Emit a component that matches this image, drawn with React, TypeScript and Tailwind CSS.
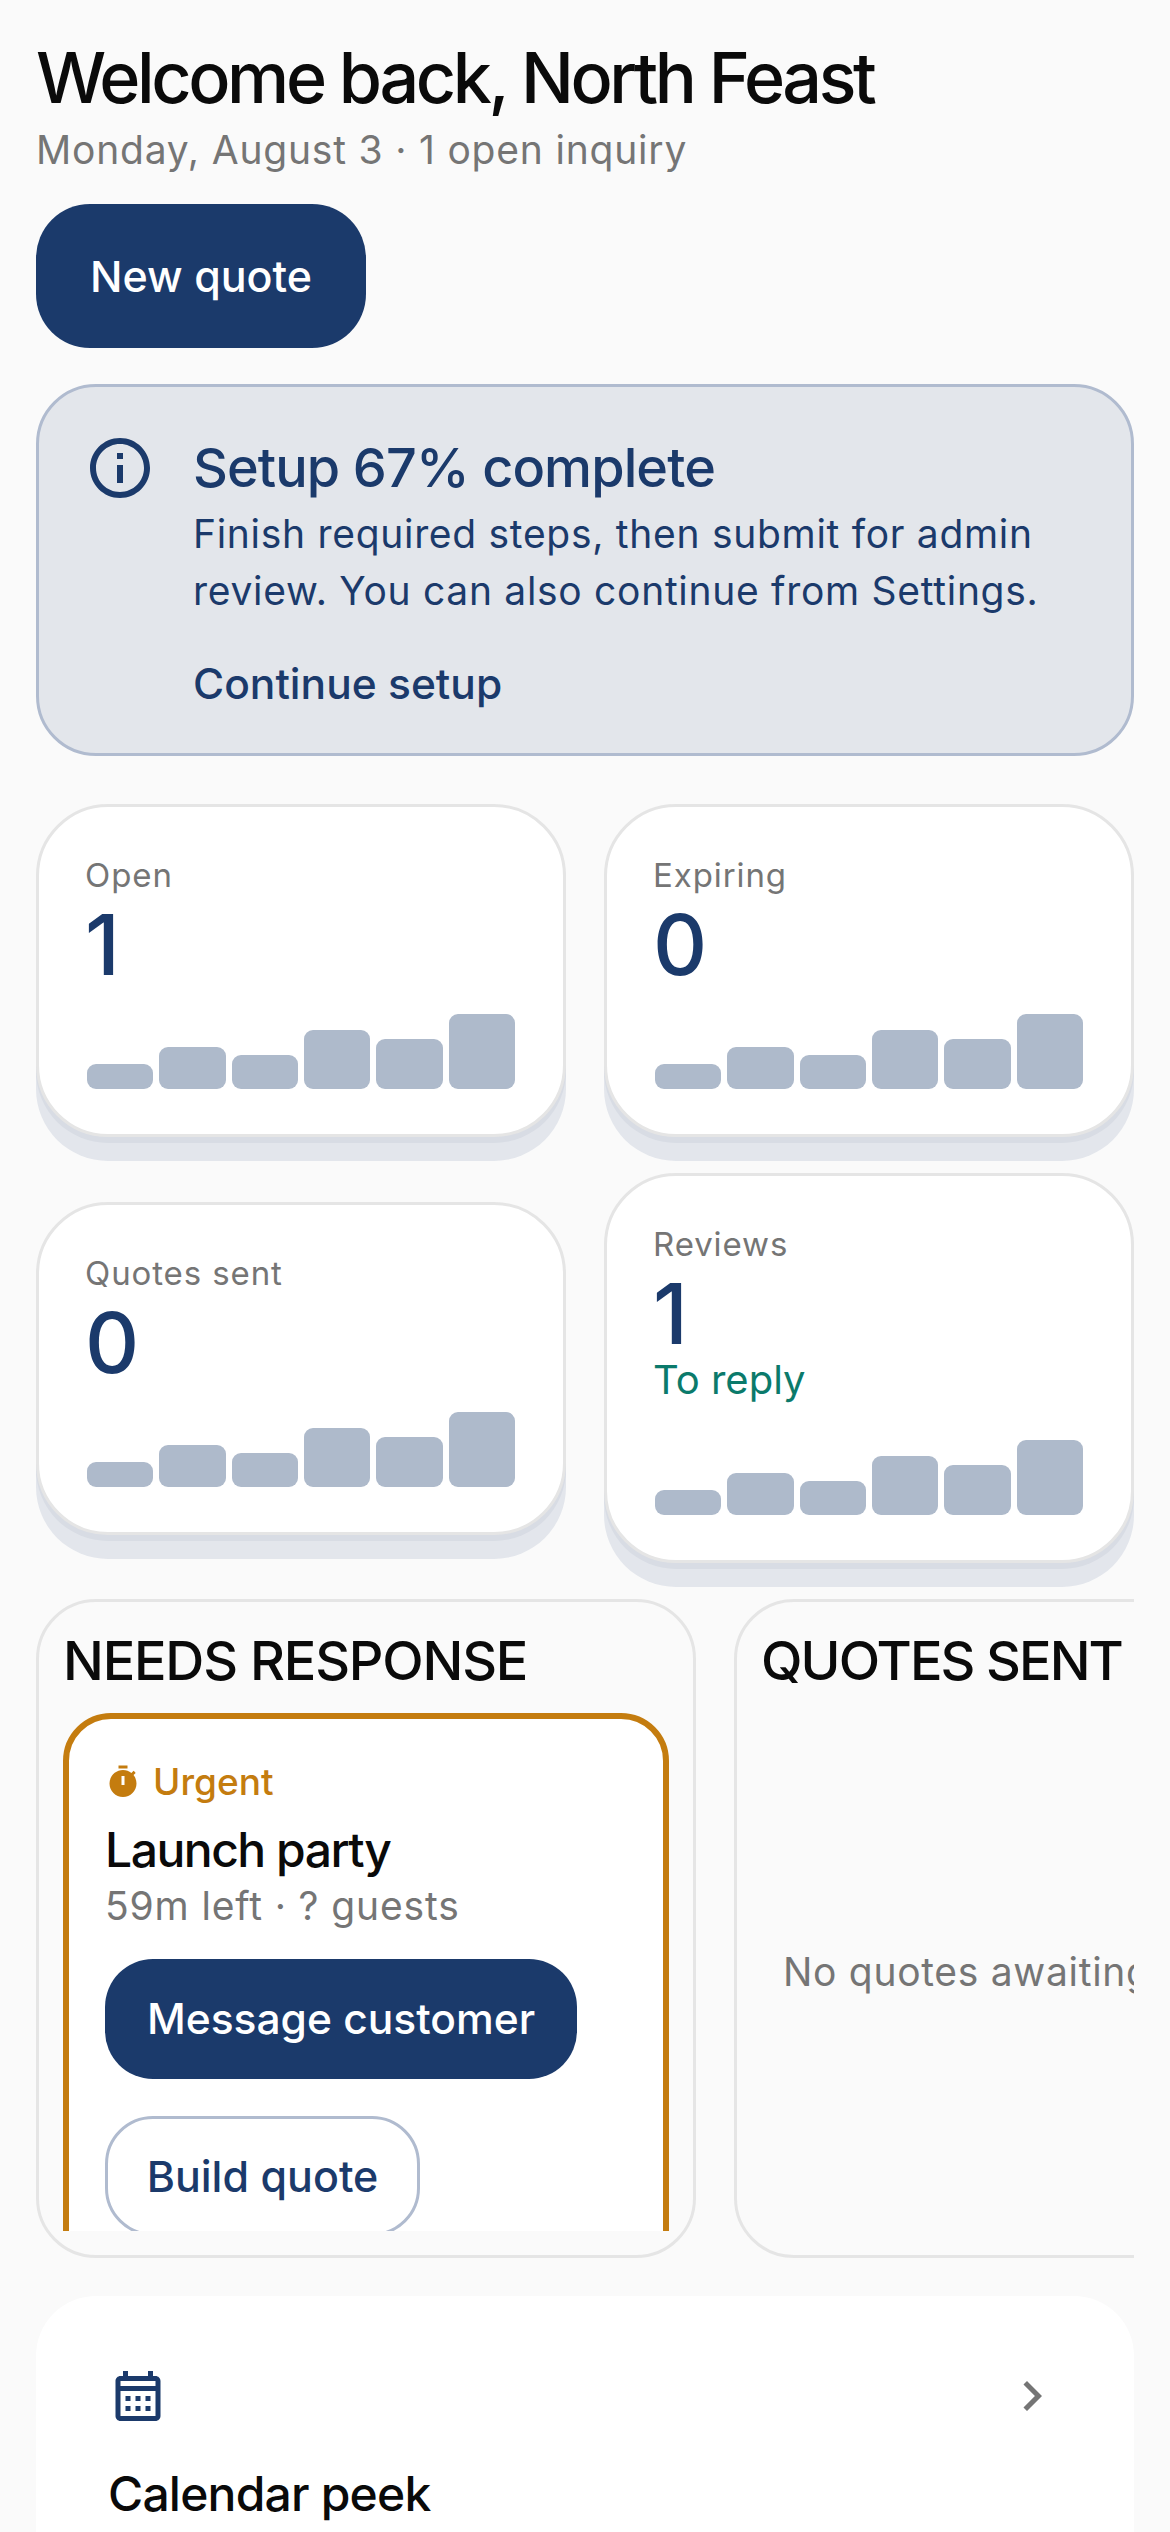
const chartBars = ["h-[25px]", "h-[42px]", "h-[34px]", "h-[59px]", "h-[50px]", "h-[75px]"];

function StatCard({ label, value, note }: { label: string; value: string; note?: string }) {
  return (
    <div className="rounded-[72px] border-[3px] border-[#e5e5e5] bg-white px-[48px] pt-[44px] pb-[45px] shadow-[0_6px_0_#d8dce4,0_24px_0_#e3e6ec]">
      <div className="ml-[-2px] text-[33px] leading-[48px] tracking-[0.9px] text-[#757575]">{label}</div>
      <div className={`mt-[4px] ml-[-2px] text-[84px] leading-[84px] font-medium tracking-[-2px] text-[#1b3a6b] ${note ? "" : "mb-[27px]"}`}>{value}</div>
      {note && <div className="mb-[36px] ml-[-2px] text-[40px] leading-[48px] text-[#0b7a6b]">{note}</div>}
      <div className="flex items-end gap-[6px]">
        {chartBars.map((h, i) => (
          <div key={i} className={`flex-1 rounded-[9px] bg-[#aebacb] ${h}`} />
        ))}
      </div>
    </div>
  );
}

export default function App() {
  return (
    <div className="h-[2532px] overflow-hidden bg-[#fafafa] px-9 font-['Inter',sans-serif]">
      <h1 className="pt-[42px] text-[70px] leading-[72px] font-medium tracking-[-3.4px] text-[#0a0a0a]">
        Welcome back, North Feast
      </h1>
      <p className="mt-[9px] text-[39px] leading-[54px] tracking-[0.8px] text-[#757575]">
        Monday, August 3 · 1 open inquiry
      </p>

      <button className="mt-[27px] block h-[144px] w-[330px] rounded-[54px] bg-[#1b3a6b] text-[43px] font-medium text-white">
        New quote
      </button>

      <section className="mt-[36px] flex gap-[37px] rounded-[60px] border-[3px] border-[#b0bbcf] bg-[#e3e6eb] px-[45px] pt-[45px] pb-[42px]">
        <svg viewBox="0 0 24 24" className="h-[72px] w-[72px] shrink-0 fill-[#1b3a6b]">
          <path d="M11 7h2v2h-2zm0 4h2v6h-2zm1-9C6.48 2 2 6.48 2 12s4.48 10 10 10 10-4.48 10-10S17.52 2 12 2zm0 18c-4.41 0-8-3.59-8-8s3.59-8 8-8 8 3.59 8 8-3.59 8-8 8z" />
        </svg>
        <div className="text-[#1b3a6b]">
          <h2 className="text-[54px] leading-[72px] font-medium tracking-[-0.9px]">Setup 67% complete</h2>
          <p className="mt-px text-[39px] leading-[57px] tracking-[0.7px]">
            Finish required steps, then submit for admin
            <br />
            review. You can also continue from Settings.
          </p>
          <div className="mt-[38px] text-[42.5px] leading-[54px] font-medium">Continue setup</div>
        </div>
      </section>

      <section className="mt-[48px] grid grid-cols-2 items-center gap-x-[38px] gap-y-[36px]">
        <StatCard label="Open" value="1" />
        <StatCard label="Expiring" value="0" />
        <StatCard label="Quotes sent" value="0" />
        <StatCard label="Reviews" value="1" note="To reply" />
      </section>

      <section className="mt-[36px] flex gap-[38px] overflow-hidden">
        <div className="flex h-[659px] w-[660px] shrink-0 flex-col rounded-[60px] border-[3px] border-[#e5e5e5] px-[24px] pt-[29px] pb-[24px]">
          <h3 className="mb-[22px] text-[54px] leading-[60px] font-medium tracking-[-1.2px] text-[#0a0a0a]">NEEDS RESPONSE</h3>
          <div className="flex-1 overflow-hidden">
            <div className="rounded-[48px] border-[6px] border-[#c47c0f] bg-white px-[36px] pt-[39px] pb-[36px]">
              <div className="flex items-center gap-[12px] text-[37px] leading-[48px] font-medium text-[#c47c0f]">
                <svg viewBox="0 0 24 24" className="h-[36px] w-[36px] fill-[#c47c0f]">
                  <path d="M15 1H9v2h6V1zm4.03 6.39l1.42-1.42c-.43-.51-.9-.99-1.41-1.41l-1.42 1.42C16.07 4.74 14.12 4 12 4c-4.97 0-9 4.03-9 9s4.02 9 9 9 9-4.03 9-9c0-2.12-.74-4.07-1.97-5.61z" />
                  <rect x="11" y="8" width="2" height="6" fill="#fff" />
                </svg>
                Urgent
              </div>
              <div className="mt-[14px] text-[48px] leading-[60px] font-medium tracking-[-1.5px] text-[#0a0a0a]">Launch party</div>
              <div className="mt-[2px] text-[39px] leading-[48px] tracking-[0.85px] text-[#757575]">59m left · ? guests</div>
              <button className="mt-[29px] block h-[120px] w-[472px] rounded-[48px] bg-[#1b3a6b] text-[42.5px] font-medium text-white">
                Message customer
              </button>
              <button className="mt-[37px] block h-[120px] w-[315px] rounded-[48px] border-[3px] border-[#b0bbcf] bg-white text-[43px] font-medium text-[#1b3a6b]">
                Build quote
              </button>
            </div>
          </div>
        </div>

        <div className="flex h-[659px] w-[660px] shrink-0 flex-col rounded-[60px] border-[3px] border-[#e5e5e5] px-[24px] pt-[29px] pb-[24px]">
          <h3 className="mb-[22px] text-[54px] leading-[60px] font-medium tracking-[-1.9px] text-[#0a0a0a]">QUOTES SENT</h3>
          <div className="flex flex-1 items-center overflow-hidden pl-[22px]">
            <p className="text-[39px] leading-[48px] tracking-[0.7px] whitespace-nowrap text-[#757575]">
              No quotes awaiting response
            </p>
          </div>
        </div>
      </section>

      <section className="mt-[38px] rounded-[60px] bg-white px-[72px] pt-[70px] pb-[72px]">
        <div className="flex items-center justify-between">
          <svg viewBox="0 0 24 24" className="h-[60px] w-[60px] fill-[#1b3a6b]">
            <path d="M19 4h-1V2h-2v2H8V2H6v2H5c-1.1 0-2 .9-2 2v14c0 1.1.9 2 2 2h14c1.1 0 2-.9 2-2V6c0-1.1-.9-2-2-2zm0 16H5V10h14v10zm0-12H5V6h14v2zM9 14H7v-2h2v2zm4 0h-2v-2h2v2zm4 0h-2v-2h2v2zm-8 4H7v-2h2v2zm4 0h-2v-2h2v2zm4 0h-2v-2h2v2z" />
          </svg>
          <svg viewBox="0 0 24 24" className="h-[60px] w-[60px] fill-[#757575]">
            <path d="M10 6 8.59 7.41 13.17 12l-4.58 4.59L10 18l6-6z" />
          </svg>
        </div>
        <h3 className="mt-[35px] text-[48px] leading-[66px] font-medium tracking-[-0.8px] text-[#0a0a0a]">Calendar peek</h3>
      </section>
    </div>
  );
}
